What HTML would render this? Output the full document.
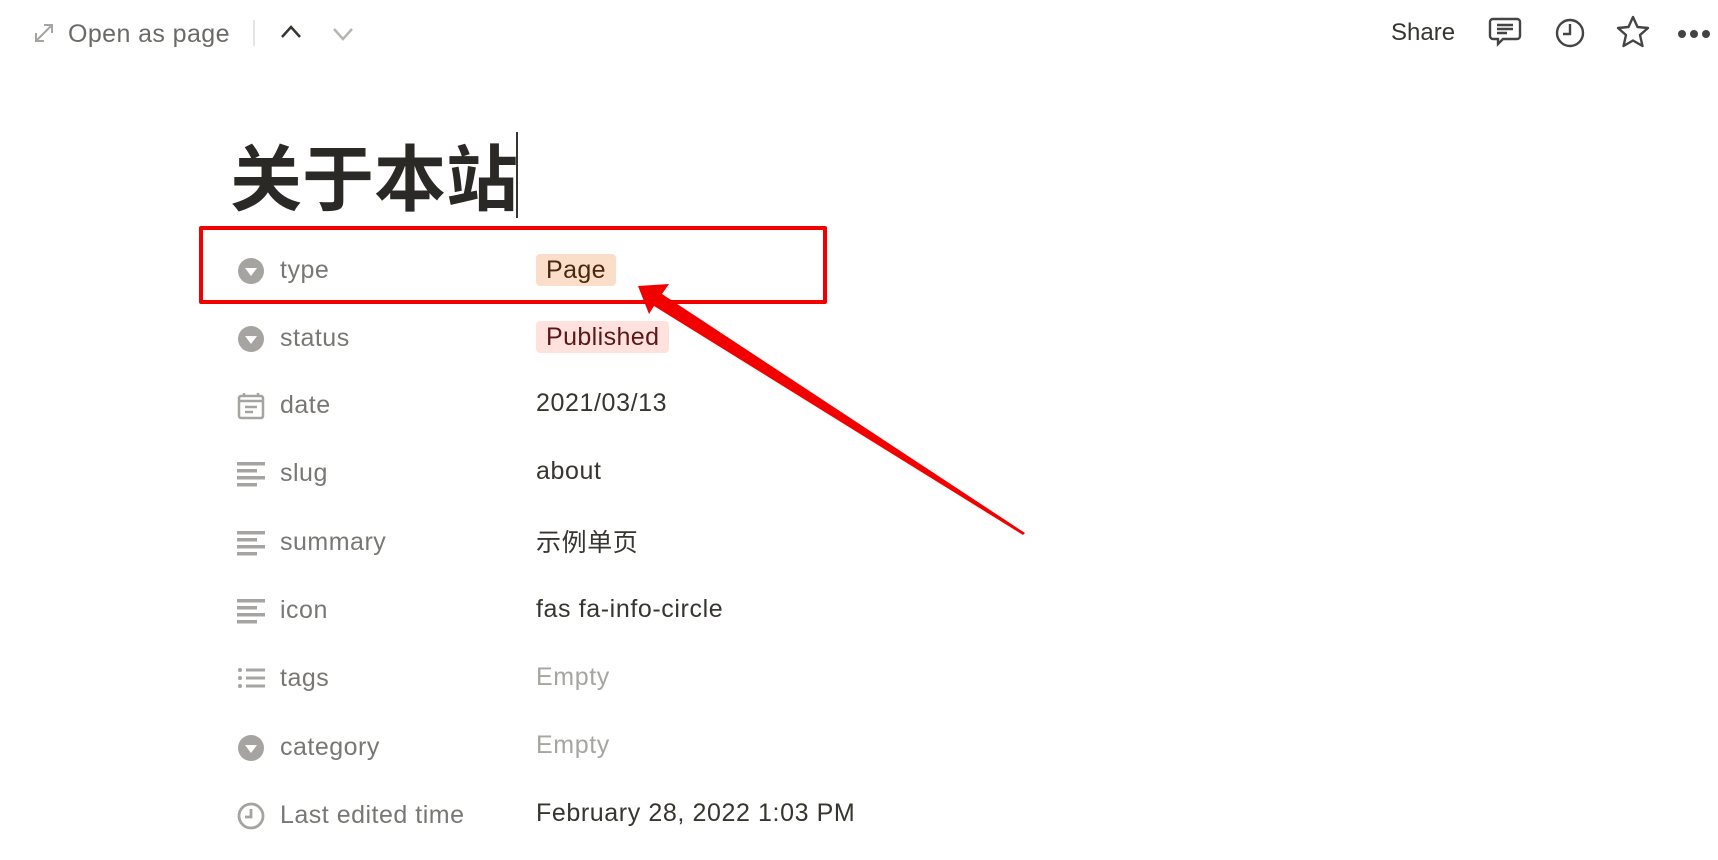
<!DOCTYPE html>
<html><head><meta charset="utf-8"><style>
body{margin:0;width:1718px;height:860px;background:#fff;position:relative;overflow:hidden;font-family:"Liberation Sans","Noto Sans CJK SC",sans-serif;}
.a{position:absolute;white-space:nowrap}
.lbl{color:#787774;font-size:25px;letter-spacing:0.5px;left:280px}
.val{color:#37352f;font-size:25px;letter-spacing:0.6px;left:536px}
.emp{color:#a6a5a1}
.ic{position:absolute;left:237px;width:28px;height:28px}
.tag{position:absolute;left:536px;height:32px;line-height:32px;border-radius:4px;padding:0 10px;font-size:25px;letter-spacing:0.4px}
</style></head><body>
<svg class="a" style="left:33px;top:22px" width="22" height="22" viewBox="0 0 22 22" fill="none" stroke="#a5a4a0" stroke-width="2"><path d="M3 19L19 3M3 11v8h8M11 3h8v8"/></svg>
<div class="a" style="left:68px;top:20px;font-size:25px;letter-spacing:0.4px;color:#6b6a66">Open as page</div>
<div class="a" style="left:253px;top:20px;width:2px;height:26px;background:#e6e5e2"></div>
<svg class="a" style="left:279px;top:24px" width="24" height="16" viewBox="0 0 24 16" fill="none" stroke="#37352f" stroke-width="2.5"><path d="M3 13L12 3l9 10"/></svg>
<svg class="a" style="left:331px;top:26px" width="24" height="16" viewBox="0 0 24 16" fill="none" stroke="#b6b5b1" stroke-width="2.5"><path d="M3 3l9 10 9-10"/></svg>
<div class="a" style="left:1391px;top:19px;font-size:24px;color:#37352f">Share</div>
<svg class="a" style="left:1488px;top:16px" width="34" height="32" viewBox="0 0 34 32" fill="none" stroke="#444" stroke-width="2.4"><path d="M5 3h24a3 3 0 0 1 3 3v14a3 3 0 0 1-3 3H15l-5 5v-5H5a3 3 0 0 1-3-3V6a3 3 0 0 1 3-3z"/><path d="M9 9h16M9 13h16M9 17h10"/></svg>
<svg class="a" style="left:1554px;top:17px" width="32" height="32" viewBox="0 0 32 32" fill="none" stroke="#444" stroke-width="2.4"><circle cx="16" cy="16" r="13"/><path d="M16 7v10h-7"/></svg>
<svg class="a" style="left:1615px;top:15px" width="36" height="34" viewBox="0 0 36 34" fill="none" stroke="#444" stroke-width="2.4" stroke-linejoin="round"><path d="M18 2l4.5 10 10.5 1-8 7 2.5 11L18 25.5 8.5 31 11 20 3 13l10.5-1z"/></svg>
<div class="a" style="left:1677px;top:26px"><svg width="34" height="10"><circle cx="5" cy="5" r="4" fill="#444"/><circle cx="17" cy="5" r="4" fill="#444"/><circle cx="29" cy="5" r="4" fill="#444"/></svg></div>
<div class="a" style="left:230px;top:121px;font-size:72px;font-weight:bold;color:#2a2925;font-family:'Noto Sans CJK SC',sans-serif">关于本站</div>
<div class="a" style="left:516px;top:132px;width:2px;height:86px;background:#37352f"></div>
<div class="a" style="left:199px;top:226px;width:620px;height:70px;border:4.5px solid #f20000;border-radius:2px"></div>
<svg class="ic" style="top:257px" viewBox="0 0 28 28"><circle cx="14" cy="14" r="13" fill="#a5a4a0"/><path d="M8 11h12l-6 8z" fill="#fff"/></svg>
<div class="a lbl" style="top:256px">type</div>
<div class="tag" style="top:254px;background:#fadec9;color:#49290e">Page</div>
<svg class="ic" style="top:325px" viewBox="0 0 28 28"><circle cx="14" cy="14" r="13" fill="#a5a4a0"/><path d="M8 11h12l-6 8z" fill="#fff"/></svg>
<div class="a lbl" style="top:324px">status</div>
<div class="tag" style="top:321px;background:#ffe2dd;color:#5d1715">Published</div>
<svg class="ic" style="top:392px" viewBox="0 0 28 28" fill="none" stroke="#a5a4a0" stroke-width="2.5"><rect x="2" y="4" width="24" height="22" rx="2"/><path d="M2 9h24M7 1v4M21 1v4M8 15h12M8 20h8"/></svg>
<div class="a lbl" style="top:391px">date</div>
<div class="a val" style="top:389px">2021/03/13</div>
<svg class="ic" style="top:460px" viewBox="0 0 28 28" fill="#a5a4a0"><rect x="0" y="2" width="28" height="3.5"/><rect x="0" y="9" width="20" height="3.5"/><rect x="0" y="16" width="28" height="3.5"/><rect x="0" y="23" width="20" height="3.5"/></svg>
<div class="a lbl" style="top:459px">slug</div>
<div class="a val" style="top:457px">about</div>
<svg class="ic" style="top:529px" viewBox="0 0 28 28" fill="#a5a4a0"><rect x="0" y="2" width="28" height="3.5"/><rect x="0" y="9" width="20" height="3.5"/><rect x="0" y="16" width="28" height="3.5"/><rect x="0" y="23" width="20" height="3.5"/></svg>
<div class="a lbl" style="top:528px">summary</div>
<div class="a val" style="top:523px">示例单页</div>
<svg class="ic" style="top:597px" viewBox="0 0 28 28" fill="#a5a4a0"><rect x="0" y="2" width="28" height="3.5"/><rect x="0" y="9" width="20" height="3.5"/><rect x="0" y="16" width="28" height="3.5"/><rect x="0" y="23" width="20" height="3.5"/></svg>
<div class="a lbl" style="top:596px">icon</div>
<div class="a val" style="top:595px">fas fa-info-circle</div>
<svg class="ic" style="top:665px" viewBox="0 0 28 28" fill="#a5a4a0"><circle cx="3" cy="5" r="2"/><circle cx="3" cy="13" r="2"/><circle cx="3" cy="21" r="2"/><rect x="9" y="3.5" width="19" height="3"/><rect x="9" y="11.5" width="19" height="3"/><rect x="9" y="19.5" width="19" height="3"/></svg>
<div class="a lbl" style="top:664px">tags</div>
<div class="a val emp" style="top:663px">Empty</div>
<svg class="ic" style="top:734px" viewBox="0 0 28 28"><circle cx="14" cy="14" r="13" fill="#a5a4a0"/><path d="M8 11h12l-6 8z" fill="#fff"/></svg>
<div class="a lbl" style="top:733px">category</div>
<div class="a val emp" style="top:731px">Empty</div>
<svg class="ic" style="top:802px" viewBox="0 0 28 28" fill="none" stroke="#a5a4a0" stroke-width="2.8"><circle cx="14" cy="14" r="12"/><path d="M14 7v8H8"/></svg>
<div class="a lbl" style="top:801px">Last edited time</div>
<div class="a val" style="top:799px">February 28, 2022 1:03 PM</div>
<svg class="a" style="left:0;top:0" width="1718" height="860"><path d="M638 286L669 284 662 294 1025 533 1023 535 654 306 649 314z" fill="#f20000"/></svg>
</body></html>
